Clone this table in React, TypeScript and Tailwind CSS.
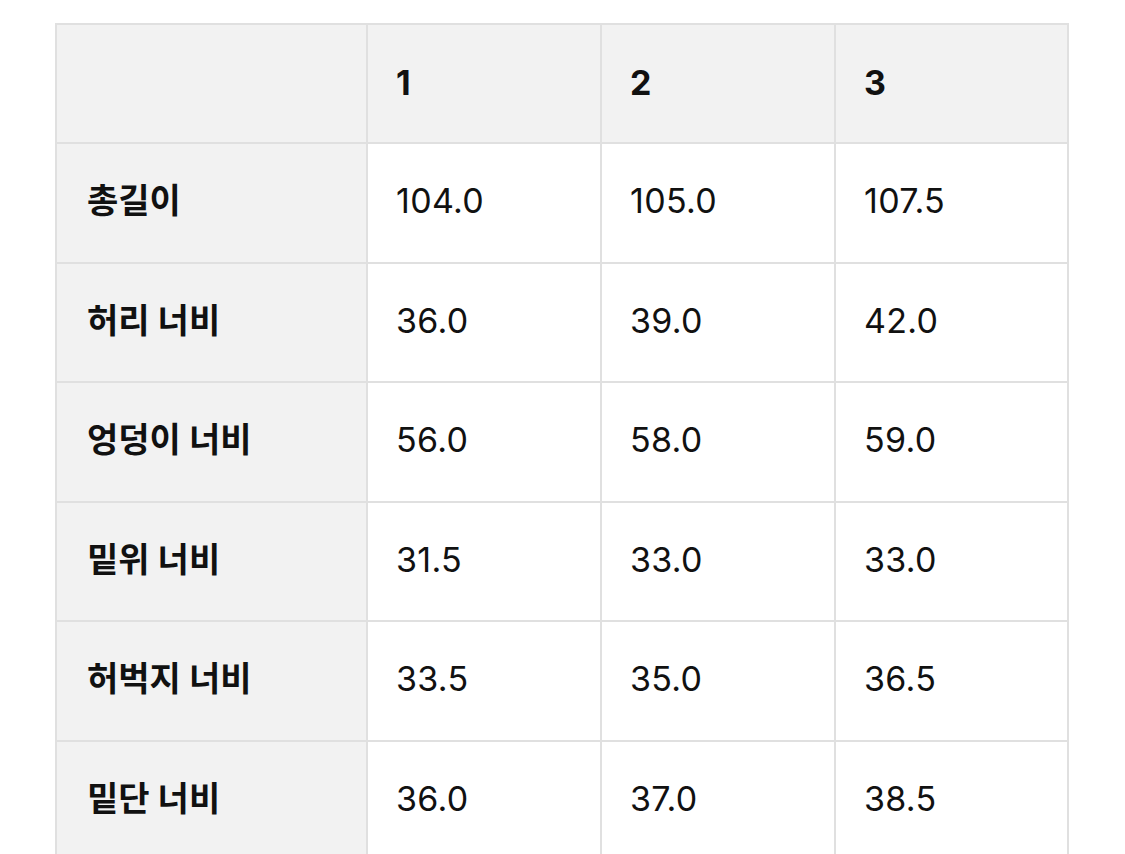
import React from 'react';

const rows: [string, string, string, string][] = [
  ['총길이', '104.0', '105.0', '107.5'],
  ['허리 너비', '36.0', '39.0', '42.0'],
  ['엉덩이 너비', '56.0', '58.0', '59.0'],
  ['밑위 너비', '31.5', '33.0', '33.0'],
  ['허벅지 너비', '33.5', '35.0', '36.5'],
  ['밑단 너비', '36.0', '37.0', '38.5'],
];

export default function App() {
  return (
    <div
      className="min-h-screen bg-white pt-[23px] pl-[55px]"
      style={{ fontFamily: "Inter, 'Noto Sans CJK KR', sans-serif" }}
    >
      <table className="border-collapse text-[34px] text-[#111]">
        <colgroup>
          <col className="w-[311px]" />
          <col className="w-[234px]" />
          <col className="w-[234px]" />
          <col className="w-[233px]" />
        </colgroup>
        <thead>
          <tr className="h-[119px] bg-[#f2f2f2]">
            <th className="border-2 border-[#e0e0e0]"></th>
            {['1', '2', '3'].map((h) => (
              <th key={h} className="border-2 border-[#e0e0e0] pl-[28px] pb-[2px] text-left font-bold">
                {h}
              </th>
            ))}
          </tr>
        </thead>
        <tbody>
          {rows.map((r) => (
            <tr key={r[0]} className="h-[119.5px]">
              <td className="border-2 border-[#e0e0e0] bg-[#f2f2f2] pl-[30px] pb-[4px] font-bold">
                {r[0]}
              </td>
              {r.slice(1).map((v, i) => (
                <td key={i} className="border-2 border-[#e0e0e0] pl-[28px] pb-[4px] tracking-[0.3px]">
                  {v}
                </td>
              ))}
            </tr>
          ))}
        </tbody>
      </table>
    </div>
  );
}
